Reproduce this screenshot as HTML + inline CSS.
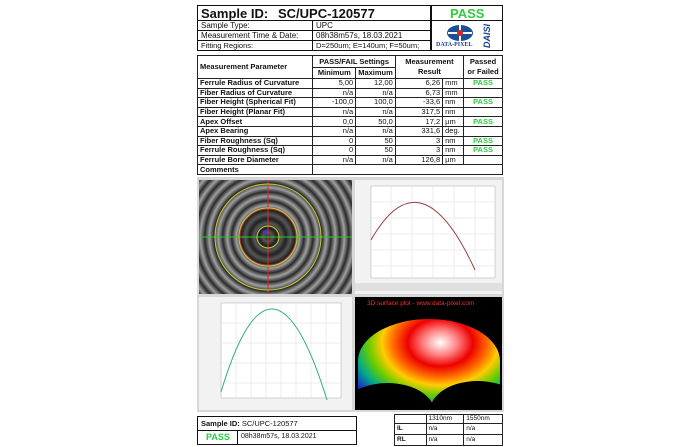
<!DOCTYPE html>
<html><head><meta charset="utf-8"><style>
*{margin:0;padding:0;box-sizing:border-box}
body{width:700px;height:447px;background:#fff;position:relative;overflow:hidden;font-family:"Liberation Sans",sans-serif;color:#111}
.a{position:absolute}
table{border-collapse:collapse;position:absolute;font-size:7.5px}
td{border:1px solid #222;padding:0 2px;white-space:nowrap;overflow:hidden;line-height:8px}
.r{text-align:right}.c{text-align:center}.b{font-weight:bold}
.g{color:#2ecc40;font-weight:bold;text-align:center}
</style></head><body>
<div class="a" style="left:197px;top:5px;width:306px;height:46px;border:1.5px solid #111"></div>
<div class="a" style="left:430px;top:5px;width:1.5px;height:46px;background:#111"></div>
<div class="a" style="left:197px;top:20px;width:233px;height:1px;background:#111"></div>
<div class="a" style="left:197px;top:30px;width:233px;height:1px;background:#111"></div>
<div class="a" style="left:197px;top:40px;width:233px;height:1px;background:#111"></div>
<div class="a" style="left:312px;top:20px;width:1px;height:31px;background:#111"></div>
<div class="a" style="left:201px;top:6px;font-size:13px;font-weight:bold">Sample ID:</div>
<div class="a" style="left:278px;top:6px;font-size:13px;font-weight:bold">SC/UPC-120577</div>
<div class="a" style="left:201px;top:21px;font-size:8px">Sample Type:</div>
<div class="a" style="left:316px;top:21px;font-size:8px">UPC</div>
<div class="a" style="left:201px;top:31px;font-size:8px">Measurement Time &amp; Date:</div>
<div class="a" style="left:316px;top:31px;font-size:8px">08h38m57s,  18.03.2021</div>
<div class="a" style="left:201px;top:41px;font-size:7.5px">Fitting Regions:</div>
<div class="a" style="left:316px;top:41px;font-size:7.5px">D=250um;  E=140um;  F=50um;</div>
<div class="a" style="left:450px;top:6px;font-size:13px;font-weight:bold;color:#2ecc40">PASS</div>
<div class="a" style="left:430px;top:20px;width:73px;height:1px;background:#111"></div>
<svg class="a" style="left:445px;top:23px" width="30" height="20"><ellipse cx="15" cy="10" rx="13" ry="8" fill="#1a4f9a"/><rect x="3" y="9" width="24" height="2" fill="#fff"/><rect x="14" y="1" width="2" height="18" fill="#fff"/><circle cx="15" cy="10" r="3" fill="#d22"/></svg>
<div class="a" style="left:436px;top:42px;font-size:6px;font-weight:bold;color:#1a3f8a;font-family:'Liberation Serif',serif">DATA-PIXEL</div>
<div class="a" style="left:482px;top:48px;font-size:9px;font-weight:bold;font-style:italic;color:#1a3f8a;transform:rotate(-90deg);transform-origin:left top">DAISI</div>
<table style="left:197px;top:55px;width:306px">
<colgroup><col style="width:116px"><col style="width:43px"><col style="width:39px"><col style="width:48px"><col style="width:21px"><col style="width:39px"></colgroup>
<tr style="height:12px"><td rowspan="2" class="b">Measurement Parameter</td><td colspan="2" class="c b">PASS/FAIL Settings</td><td colspan="2" rowspan="2" class="c b" style="line-height:10px">Measurement<br>Result</td><td rowspan="2" class="c b" style="line-height:10px">Passed<br>or Failed</td></tr>
<tr style="height:11px"><td class="c b">Minimum</td><td class="c b">Maximum</td></tr>
<tr style="height:9.6px"><td class="b">Ferrule Radius of Curvature</td><td class="r">5,00</td><td class="r">12,00</td><td class="r">6,26</td><td>mm</td><td class="g">PASS</td></tr>
<tr style="height:9.6px"><td class="b">Fiber Radius of Curvature</td><td class="r">n/a</td><td class="r">n/a</td><td class="r">6,73</td><td>mm</td><td></td></tr>
<tr style="height:9.6px"><td class="b">Fiber Height (Spherical Fit)</td><td class="r">-100,0</td><td class="r">100,0</td><td class="r">-33,6</td><td>nm</td><td class="g">PASS</td></tr>
<tr style="height:9.6px"><td class="b">Fiber Height (Planar Fit)</td><td class="r">n/a</td><td class="r">n/a</td><td class="r">317,5</td><td>nm</td><td></td></tr>
<tr style="height:9.6px"><td class="b">Apex Offset</td><td class="r">0,0</td><td class="r">50,0</td><td class="r">17,2</td><td>µm</td><td class="g">PASS</td></tr>
<tr style="height:9.6px"><td class="b">Apex Bearing</td><td class="r">n/a</td><td class="r">n/a</td><td class="r">331,6</td><td>deg.</td><td></td></tr>
<tr style="height:9.6px"><td class="b">Fiber Roughness (Sq)</td><td class="r">0</td><td class="r">50</td><td class="r">3</td><td>nm</td><td class="g">PASS</td></tr>
<tr style="height:9.6px"><td class="b">Ferrule Roughness (Sq)</td><td class="r">0</td><td class="r">50</td><td class="r">3</td><td>nm</td><td class="g">PASS</td></tr>
<tr style="height:9.6px"><td class="b">Ferrule Bore Diameter</td><td class="r">n/a</td><td class="r">n/a</td><td class="r">126,8</td><td>µm</td><td></td></tr>
<tr style="height:9.6px"><td class="b">Comments</td><td colspan="5"></td></tr>
</table>
<div class="a" style="left:197px;top:177px;width:307px;height:235px;background:#d8d8d8"></div>
<div class="a" style="left:199px;top:180px;width:153px;height:114px;background:repeating-radial-gradient(circle at 45% 50%,#2a2a2a 0,#a0a0a0 4.5px,#2a2a2a 9px)"></div>
<svg class="a" style="left:199px;top:180px" width="153" height="114">
<circle cx="69" cy="57" r="28" fill="#1a1a1a" opacity=".55"/>
<line x1="69" y1="0" x2="69" y2="114" stroke="#e22" stroke-width="1"/>
<line x1="0" y1="57" x2="153" y2="57" stroke="#2c2" stroke-width="1"/>
<circle cx="69" cy="57" r="53" fill="none" stroke="#cc3" stroke-width="1"/>
<circle cx="69" cy="57" r="29" fill="none" stroke="#cc3" stroke-width="1"/>
<circle cx="69" cy="57" r="28" fill="none" stroke="#c33" stroke-width=".7"/>
<circle cx="69" cy="57" r="11" fill="none" stroke="#cc3" stroke-width="1"/>
<circle cx="66" cy="52" r="2" fill="#33f"/></svg>
<svg class="a" style="left:355px;top:180px;background:#f2f2f2" width="147" height="114">
<rect x="16" y="6" width="124" height="92" fill="#fff" stroke="#aaa" stroke-width=".5"/>
<g stroke="#ddd" stroke-width=".5"><line x1="36" y1="6" x2="36" y2="98"/><line x1="57" y1="6" x2="57" y2="98"/><line x1="78" y1="6" x2="78" y2="98"/><line x1="99" y1="6" x2="99" y2="98"/><line x1="120" y1="6" x2="120" y2="98"/><line x1="16" y1="22" x2="140" y2="22"/><line x1="16" y1="38" x2="140" y2="38"/><line x1="16" y1="54" x2="140" y2="54"/><line x1="16" y1="70" x2="140" y2="70"/><line x1="16" y1="86" x2="140" y2="86"/></g>
<path d="M16 60 Q66 -28 120 90" fill="none" stroke="#944" stroke-width="1"/>
<rect x="0" y="103" width="147" height="8" fill="#e0e0e0"/></svg>
<svg class="a" style="left:199px;top:297px;background:#f2f2f2" width="153" height="113">
<rect x="22" y="6" width="120" height="95" fill="#fff" stroke="#aaa" stroke-width=".5"/>
<g stroke="#ddd" stroke-width=".5"><line x1="37" y1="6" x2="37" y2="101"/><line x1="52" y1="6" x2="52" y2="101"/><line x1="67" y1="6" x2="67" y2="101"/><line x1="82" y1="6" x2="82" y2="101"/><line x1="97" y1="6" x2="97" y2="101"/><line x1="112" y1="6" x2="112" y2="101"/><line x1="127" y1="6" x2="127" y2="101"/><line x1="22" y1="26" x2="142" y2="26"/><line x1="22" y1="46" x2="142" y2="46"/><line x1="22" y1="66" x2="142" y2="66"/><line x1="22" y1="86" x2="142" y2="86"/></g>
<path d="M22 95 Q73 -75 128 103" fill="none" stroke="#3a8" stroke-width="1"/></svg>
<div class="a" style="left:355px;top:297px;width:147px;height:113px;background:#000;overflow:hidden">
<div class="a" style="left:3px;top:22px;width:142px;height:84px;border-radius:50% 50% 10% 10%;background:radial-gradient(ellipse at 58% 28%,#fff 0,#f88 14%,#e00 28%,#f60 40%,#fc0 50%,#6c0 62%,#0a8 74%,#22c 88%)"></div>
<div class="a" style="left:-15px;top:86px;width:95px;height:60px;border-radius:50%;background:#000"></div>
<div class="a" style="left:75px;top:84px;width:95px;height:60px;border-radius:50%;background:#000"></div>
<div class="a" style="left:12px;top:3px;font-size:6.5px;color:#e33">3D surface plot - www.data-pixel.com</div></div>
<div class="a" style="left:197px;top:416px;width:160px;height:29px;border:1.5px solid #111"></div>
<div class="a" style="left:197px;top:430px;width:160px;height:1px;background:#111"></div>
<div class="a" style="left:237px;top:430px;width:1px;height:15px;background:#111"></div>
<div class="a" style="left:201px;top:419px;font-size:7.5px"><b>Sample ID:</b> SC/UPC-120577</div>
<div class="a" style="left:206px;top:432px;font-size:9px;font-weight:bold;color:#2ecc40">PASS</div>
<div class="a" style="left:241px;top:433px;font-size:7px">08h38m57s,  18.03.2021</div>
<table style="left:394px;top:414px;width:109px;font-size:6.5px">
<colgroup><col style="width:32px"><col style="width:38px"><col style="width:39px"></colgroup>
<tr style="height:8px"><td></td><td>1310nm</td><td>1550nm</td></tr>
<tr style="height:11px"><td class="b">IL</td><td>n/a</td><td>n/a</td></tr>
<tr style="height:11px"><td class="b">RL</td><td>n/a</td><td>n/a</td></tr>
</table>
</body></html>
